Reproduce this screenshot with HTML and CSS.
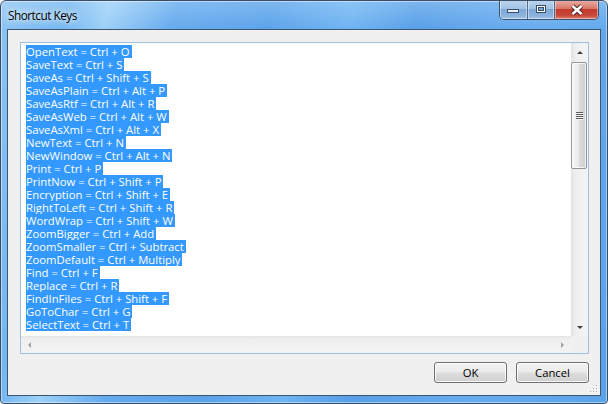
FILE: index.html
```html
<!DOCTYPE html>
<html>

<head>
    <title>Shortcut Keys</title>
    <meta charset="utf-8">
    <link rel="stylesheet" href="styles.css">
</head>

<body>
    <div class="window">
        <div class="titlebar">
            <span class="title">Shortcut Keys</span>
            <div class="captions">
                <div class="cap min">
                    <svg width="13" height="5" viewBox="0 0 13 5"><rect x="0.5" y="0.5" width="11" height="3" fill="#e8f0f9" stroke="#3b4f68"/></svg>
                </div>
                <div class="cap max">
                    <svg width="11" height="9" viewBox="0 0 11 9"><rect x="0.5" y="0.5" width="9" height="7" fill="#fff" stroke="#3b4f68"/><rect x="2.5" y="2.5" width="5" height="3" fill="#7ea5d2" stroke="#3b4f68"/></svg>
                </div>
                <div class="cap close">
                    <svg width="14" height="12" viewBox="0 0 14 12"><path d="M2.5 2 L11.5 10 M11.5 2 L2.5 10" stroke="#4a2a26" stroke-width="4.4"/><path d="M2.5 2 L11.5 10 M11.5 2 L2.5 10" stroke="#fff" stroke-width="2.4"/></svg>
                </div>
            </div>
        </div>

        <div class="client">
            <div class="textbox">
                <div class="tb-main">
                    <div class="text">
                        <div class="line"><span>OpenText = Ctrl + O</span></div>
                        <div class="line"><span>SaveText = Ctrl + S</span></div>
                        <div class="line"><span>SaveAs = Ctrl + Shift + S</span></div>
                        <div class="line"><span>SaveAsPlain = Ctrl + Alt + P</span></div>
                        <div class="line"><span>SaveAsRtf = Ctrl + Alt + R</span></div>
                        <div class="line"><span>SaveAsWeb = Ctrl + Alt + W</span></div>
                        <div class="line"><span>SaveAsXml = Ctrl + Alt + X</span></div>
                        <div class="line"><span>NewText = Ctrl + N</span></div>
                        <div class="line"><span>NewWindow = Ctrl + Alt + N</span></div>
                        <div class="line"><span>Print = Ctrl + P</span></div>
                        <div class="line"><span>PrintNow = Ctrl + Shift + P</span></div>
                        <div class="line"><span>Encryption = Ctrl + Shift + E</span></div>
                        <div class="line"><span>RightToLeft = Ctrl + Shift + R</span></div>
                        <div class="line"><span>WordWrap = Ctrl + Shift + W</span></div>
                        <div class="line"><span>ZoomBigger = Ctrl + Add</span></div>
                        <div class="line"><span>ZoomSmaller = Ctrl + Subtract</span></div>
                        <div class="line"><span>ZoomDefault = Ctrl + Multiply</span></div>
                        <div class="line"><span>Find = Ctrl + F</span></div>
                        <div class="line"><span>Replace = Ctrl + R</span></div>
                        <div class="line"><span>FindInFiles = Ctrl + Shift + F</span></div>
                        <div class="line"><span>GoToChar = Ctrl + G</span></div>
                        <div class="line"><span>SelectText = Ctrl + T</span></div>
                    </div>
                    <div class="vscroll">
                        <div class="sb-btn"><span class="arrow up"></span></div>
                        <div class="vtrack">
                            <div class="thumb">
                                <span class="grip"></span>
                            </div>
                        </div>
                        <div class="sb-btn"><span class="arrow down"></span></div>
                    </div>
                </div>
                <div class="tb-bottom">
                    <div class="hscroll">
                        <div class="sb-btn"><span class="arrow left"></span></div>
                        <div class="sb-btn"><span class="arrow right"></span></div>
                    </div>
                    <div class="corner"></div>
                </div>
            </div>

            <div class="buttons">
                <button type="button" class="btn">OK</button>
                <button type="button" class="btn">Cancel</button>
            </div>

            <svg class="sizegrip" width="11" height="11" viewBox="0 0 11 11">
                <rect x="8" y="2" width="1" height="1" fill="#a9a9a9"/><rect x="9" y="3" width="1" height="1" fill="#fff"/>
                <rect x="5" y="5" width="1" height="1" fill="#a9a9a9"/><rect x="6" y="6" width="1" height="1" fill="#fff"/>
                <rect x="8" y="5" width="1" height="1" fill="#a9a9a9"/><rect x="9" y="6" width="1" height="1" fill="#fff"/>
                <rect x="2" y="8" width="1" height="1" fill="#a9a9a9"/><rect x="3" y="9" width="1" height="1" fill="#fff"/>
                <rect x="5" y="8" width="1" height="1" fill="#a9a9a9"/><rect x="6" y="9" width="1" height="1" fill="#fff"/>
                <rect x="8" y="8" width="1" height="1" fill="#a9a9a9"/><rect x="9" y="9" width="1" height="1" fill="#fff"/>
            </svg>
        </div>
    </div>
</body>

</html>
```
FILE: styles.css
```css
html,
body {
    margin: 0;
    background-color: #ffffff;
}

* {
    box-sizing: border-box;
    font-family: 'Open Sans', 'Noto Sans', sans-serif;
}

.window {
    width: 608px;
    height: 404px;
    display: flex;
    flex-direction: column;
    border: 1px solid #3a4e66;
    border-radius: 6px 6px 4px 4px;
    background:
        linear-gradient(to bottom, rgba(255, 255, 255, 0.22), rgba(255, 255, 255, 0) 30px),
        linear-gradient(100deg, #8cc4f3 0%, #73b6f1 10%, #9cd0f7 16%, #63aaee 26%, #5aa2ea 40%, #6db4f2 52%, #579fe8 62%, #66acef 80%, #5aa3eb 100%);
    box-shadow: inset 0 0 0 1px rgba(255, 255, 255, 0.45);
    overflow: hidden;
}

.titlebar {
    height: 28px;
    display: flex;
    align-items: center;
}

.title {
    padding-left: 7px;
    padding-bottom: 1px;
    font-size: 11.8px;
    letter-spacing: -0.5px;
    color: #000;
    text-shadow: 0 0 6px #fff, 0 0 10px rgba(255, 255, 255, 0.8);
}

.captions {
    margin-left: auto;
    margin-right: 8px;
    align-self: flex-start;
    margin-top: -1px;
    height: 20px;
    display: flex;
    border: 1px solid #3c536e;
    border-top: none;
    border-radius: 0 0 5px 5px;
    overflow: hidden;
}

.cap {
    height: 100%;
    display: flex;
    align-items: center;
    justify-content: center;
    box-shadow: inset 0 0 0 1px rgba(255, 255, 255, 0.45);
}

.min,
.max {
    background: linear-gradient(to bottom, #bcd6f0 0%, #a2c3e6 45%, #7fa8d8 50%, #8cb3de 85%, #a5c6e9 100%);
    border-right: 1px solid #4f6a89;
}

.min {
    width: 28px;
    padding-top: 4px;
}

.max {
    width: 27px;
}

.close {
    width: 43px;
    background: linear-gradient(to bottom, #eab0a6 0%, #d9776b 45%, #c43b2e 50%, #c8473a 80%, #dc7b6c 100%);
}

.client {
    position: relative;
    flex: 1;
    margin: 0 6px 7px 6px;
    border: 1px solid #3f5671;
    background-color: #f0f0f0;
    padding: 12px 11px 12px 12px;
    display: flex;
    flex-direction: column;
}

.textbox {
    height: 312px;
    border: 1px solid #9fbfe0;
    background-color: #ffffff;
    display: flex;
    flex-direction: column;
}

.tb-main {
    flex: 1;
    display: flex;
    min-height: 0;
}

.text {
    flex: 1;
    padding: 2px 0 0 5px;
    overflow: hidden;
}

.line {
    height: 13px;
    line-height: 13px;
    font-size: 11.3px;
    white-space: nowrap;
}

.line span {
    display: inline-block;
    height: 13px;
    padding-right: 2px;
    background-color: #3399ff;
    color: #ffffff;
}

.vscroll {
    width: 17px;
    display: flex;
    flex-direction: column;
    background: linear-gradient(to right, #e3e3e3 0%, #eeeeee 25%, #f4f4f4 100%);
}

.sb-btn {
    width: 17px;
    height: 17px;
    display: flex;
    align-items: center;
    justify-content: center;
}

.vtrack {
    flex: 1;
}

.thumb {
    margin: 2px 1px 0 0;
    height: 107px;
    border: 1px solid #959595;
    border-radius: 2px;
    background: linear-gradient(to right, #f5f5f5 0%, #ebebeb 45%, #dbdbdb 55%, #cfcfcf 100%);
    box-shadow: inset 0 0 0 1px rgba(255, 255, 255, 0.7);
    display: flex;
    align-items: center;
    justify-content: center;
}

.grip {
    width: 7px;
    height: 8px;
    background: repeating-linear-gradient(to bottom, #5c5c5c 0, #5c5c5c 1px, #f4f4f4 1px, #f4f4f4 2px);
}

.arrow {
    width: 0;
    height: 0;
    border-style: solid;
}

.arrow.up {
    margin-top: 2px;
    border-width: 0 3.5px 3px 3.5px;
    border-color: transparent transparent #404040 transparent;
}

.arrow.down {
    border-width: 3px 3.5px 0 3.5px;
    border-color: #404040 transparent transparent transparent;
}

.arrow.left {
    border-width: 3.5px 3px 3.5px 0;
    border-color: transparent #a3a3a3 transparent transparent;
}

.arrow.right {
    border-width: 3.5px 0 3.5px 3px;
    border-color: transparent transparent transparent #a3a3a3;
}

.tb-bottom {
    height: 17px;
    display: flex;
}

.hscroll {
    flex: 1;
    display: flex;
    justify-content: space-between;
    background: linear-gradient(to bottom, #e4e4e4 0%, #efefef 20%, #f3f3f3 100%);
}

.corner {
    width: 17px;
    background-color: #f0f0f0;
}

.buttons {
    margin-top: 8px;
    display: flex;
    justify-content: flex-end;
    gap: 9px;
}

.btn {
    width: 73px;
    height: 21px;
    padding: 0;
    border: 1px solid #707070;
    border-radius: 3px;
    background: linear-gradient(to bottom, #f2f2f2 0%, #ebebeb 48%, #dddddd 52%, #cfcfcf 100%);
    box-shadow: inset 0 0 0 1px rgba(255, 255, 255, 0.8);
    font-size: 11.3px;
    color: #000;
}

.sizegrip {
    position: absolute;
    right: 1px;
    bottom: 1px;
}
```
